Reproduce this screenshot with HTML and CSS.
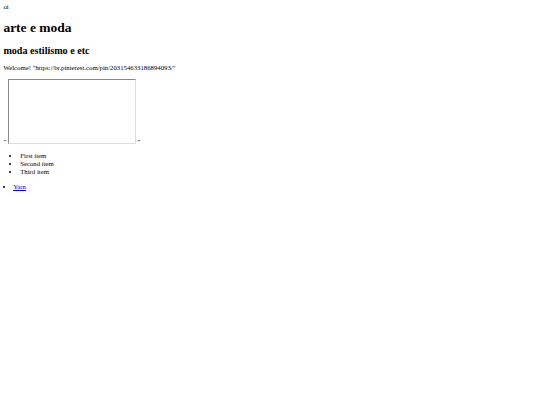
FILE: index.html
```html
<html>
<head>
<meta charset="utf-8">
<title>arte e moda</title>
<link rel="stylesheet" href="styles.css">
</head>
<body class="page">
oi
<h1 class="title">arte e moda</h1>
<h2 class="subtitle">moda estilismo e etc</h2>
<p class="welcome">Welcome! "https://br.pinterest.com/pin/203154633186894093/"</p>
" <iframe class="frame" title="pin"></iframe> "
<ul class="items">
<li>First item</li>
<li>Second item</li>
<li>Third item</li>
</ul>
<li class="link-item"><a href="#">Yarn</a></li>
</body>
</html>
```
FILE: styles.css
```css
.page {
  margin: 3.375px;
  font-family: "Liberation Serif", "Times New Roman", serif;
  font-size: 6.75px;
  line-height: 8px;
  color: #000;
  background: #fff;
}
.title {
  font-size: 13.5px;
  line-height: 15.5px;
  margin: 9px 0;
}
.subtitle {
  font-size: 10.125px;
  line-height: 11.6px;
  margin: 8.4px 0 7.4px;
}
.welcome {
  margin: 6.75px 0;
}
.frame {
  width: 126px;
  height: 63px;
  border: 1px inset #ddd;
}
.items {
  padding-left: 16.875px;
  margin: 6.75px 0;
}
.link-item {
  list-style-position: inside;
}
.link-item a {
  color: #0000ee;
}
```
